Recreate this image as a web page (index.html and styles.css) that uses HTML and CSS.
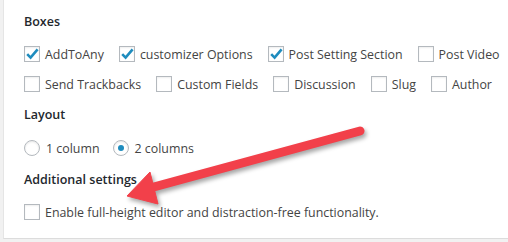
FILE: index.html
```html
<!DOCTYPE html>
<html>
<head>
<meta charset="utf-8">
<link rel="stylesheet" href="styles.css">
</head>
<body>
<div class="panel">
  <h5 class="heading h-first">Boxes</h5>
  <div class="row">
    <label class="opt"><span class="cb on"><svg viewBox="0 0 16 16"><path d="M3.2 8.2 L6.6 11.6 L13.6 3.4"/></svg></span>AddToAny</label>
    <label class="opt"><span class="cb on"><svg viewBox="0 0 16 16"><path d="M3.2 8.2 L6.6 11.6 L13.6 3.4"/></svg></span>customizer Options</label>
    <label class="opt"><span class="cb on"><svg viewBox="0 0 16 16"><path d="M3.2 8.2 L6.6 11.6 L13.6 3.4"/></svg></span>Post Setting Section</label>
    <label class="opt"><span class="cb"></span>Post Video</label>
  </div>
  <div class="row">
    <label class="opt"><span class="cb"></span>Send Trackbacks</label>
    <label class="opt"><span class="cb"></span>Custom Fields</label>
    <label class="opt"><span class="cb"></span>Discussion</label>
    <label class="opt"><span class="cb"></span>Slug</label>
    <label class="opt"><span class="cb"></span>Author</label>
  </div>
  <h5 class="heading h-layout">Layout</h5>
  <div class="row radio-row">
    <label class="opt radio-opt"><span class="rd"></span>1 column</label>
    <label class="opt radio-opt"><span class="rd on"></span>2 columns</label>
  </div>
  <h5 class="heading h-add">Additional settings</h5>
  <div class="row">
    <label class="opt"><span class="cb"></span>Enable full-height editor and distraction-free functionality.</label>
  </div>
  <svg class="arrow" viewBox="0 0 508 242" width="508" height="242">
    <g class="arrow-g">
      <line x1="360" y1="131" x2="150" y2="188" />
      <polygon points="127,196 150,172 158,204" />
    </g>
  </svg>
</div>
</body>
</html>
```
FILE: styles.css
```css
html, body {
  margin: 0;
  padding: 0;
}
body {
  background: #f1f1f1;
  width: 508px;
  height: 242px;
  overflow: hidden;
  font-family: "Open Sans", "Noto Sans", sans-serif;
  font-size: 12.4px;
  color: #444;
}
.panel {
  position: relative;
  margin-left: 3px;
  width: 520px;
  background: #fff;
  border-left: 1px solid #e5e5e5;
  border-bottom: 1px solid #dcdcdc;
  padding: 12px 0 0 20px;
  box-sizing: border-box;
  height: 239px;
}
.heading {
  margin: 0;
  height: 20px;
  line-height: 20px;
  font-size: 12.5px;
  font-weight: 600;
  color: #23282d;
}
.h-first { margin-bottom: 7px; }
.h-layout { margin-top: 6px; margin-bottom: 8px; }
.h-add { margin-top: 7px; margin-bottom: 7px; }
.row {
  display: flex;
  align-items: center;
  height: 30px;
  gap: 15px;
  white-space: nowrap;
}
.radio-row { gap: 13px; }
.opt {
  display: flex;
  align-items: center;
  gap: 5px;
}
.radio-opt { gap: 6px; }
.cb {
  width: 16px;
  height: 16px;
  box-sizing: border-box;
  border: 1px solid #b4b9be;
  background: #fff;
  box-shadow: inset 0 1px 2px rgba(0,0,0,0.07);
  position: relative;
  flex: none;
}
.cb svg {
  position: absolute;
  left: -1px;
  top: -1px;
  width: 16px;
  height: 16px;
  overflow: visible;
}
.cb svg path {
  fill: none;
  stroke: #1e8cbe;
  stroke-width: 2.6;
  stroke-linecap: butt;
  stroke-linejoin: miter;
}
.rd {
  width: 16px;
  height: 16px;
  box-sizing: border-box;
  border: 1px solid #b4b9be;
  border-radius: 50%;
  background: #fff;
  box-shadow: inset 0 1px 2px rgba(0,0,0,0.1);
  position: relative;
  flex: none;
}
.rd.on::after {
  content: "";
  position: absolute;
  left: 4px;
  top: 4px;
  width: 6px;
  height: 6px;
  border-radius: 50%;
  background: #1e8cbe;
}
.arrow {
  position: absolute;
  left: -4px;
  top: 0;
  pointer-events: none;
  overflow: visible;
}
.arrow-g {
  filter: drop-shadow(2px 3px 2px rgba(0,0,0,0.35));
}
.arrow-g line {
  stroke: #f2404a;
  stroke-width: 9;
  stroke-linecap: round;
}
.arrow-g polygon {
  fill: #f2404a;
  stroke: #f2404a;
  stroke-width: 1;
  stroke-linejoin: round;
}
```
